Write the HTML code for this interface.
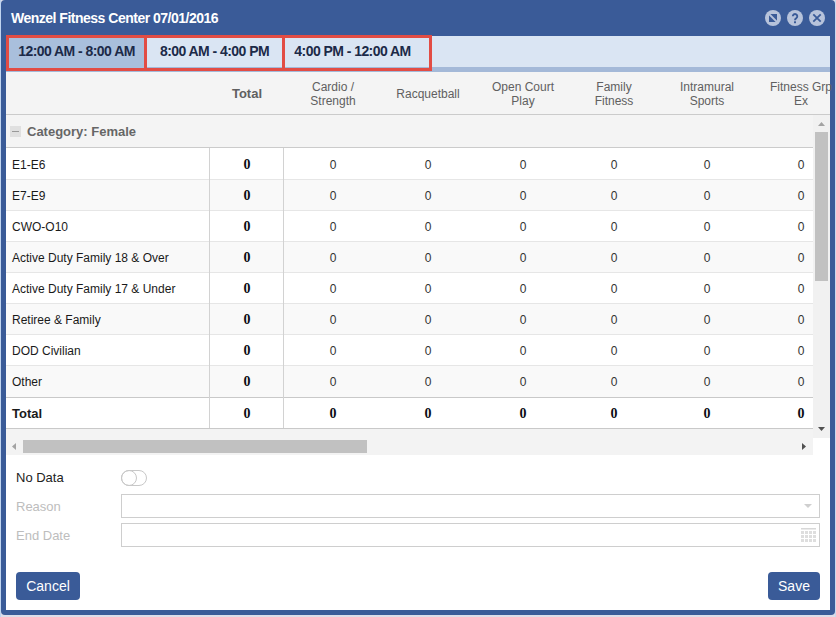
<!DOCTYPE html>
<html><head><meta charset="utf-8">
<style>
*{margin:0;padding:0;box-sizing:border-box}
html,body{width:836px;height:617px;overflow:hidden;background:#dcdde9;font-family:"Liberation Sans",sans-serif}
.a{position:absolute}
#win{position:absolute;left:1px;top:0;width:834px;height:615px;background:#3a5b98;border-radius:4px}
#inner{position:absolute;left:6px;top:36px;width:824px;height:574px;background:#fff}
#title{position:absolute;left:11px;top:10px;color:#fff;font-weight:bold;font-size:14px;line-height:16px;letter-spacing:-0.5px;white-space:nowrap}
.ico{position:absolute;top:10px;width:16px;height:16px}
#tabbar{position:absolute;left:6px;top:36px;width:824px;height:36px;background:#dae5f3;border-bottom:5px solid #a4b9d8}
.tab{position:absolute;top:35px;height:36px;border:3px solid #e24c44;font-size:14px;font-weight:bold;color:#1c2a48;text-align:center;line-height:27px;letter-spacing:-0.55px;white-space:nowrap}
#hdr{position:absolute;left:6px;top:72px;width:824px;height:43px;background:#f4f4f4;border-bottom:1px solid #cbcbcb}
.hc{position:absolute;top:0px;height:43px;display:flex;align-items:center;justify-content:center;text-align:center;font-size:12px;color:#606060;line-height:14px;white-space:nowrap}
#cat{position:absolute;left:6px;top:115px;width:807px;height:33px;background:#f4f4f4;border-bottom:1px solid #cbcbcb}
.rw{position:absolute;left:6px;width:807px}
.alt{background:#f9f9f9}
.hl{position:absolute;left:6px;width:807px;height:1px;background:#e6e6e6}
.dl{position:absolute;left:6px;width:807px;height:1px;background:#c9c9c9}
.lbl{position:absolute;left:12px;font-size:12px;line-height:14px;color:#1a1a1a;white-space:nowrap}
.v{position:absolute;font-size:12px;line-height:14px;color:#333;text-align:center;width:60px}
.b{font-family:"Liberation Serif",serif;font-weight:bold;font-size:14px;color:#0c0c14}
.vl{position:absolute;top:148px;width:1px;height:280px;background:#d2d2d2}
#vs{position:absolute;left:813px;top:115px;width:17px;height:323px;background:#f1f1f1}
#hs{position:absolute;left:6px;top:429px;width:807px;height:26px;background:#f3f3f3}
.lab{position:absolute;left:16px;font-size:13px;line-height:15px;color:#bdbdbd;white-space:nowrap}
.inp{position:absolute;left:121px;width:699px;height:24px;border:1px solid #cecece;background:#fff}
.btn{position:absolute;top:572px;height:28px;background:#3a5b98;border-radius:4px;color:#fff;font-size:14px;text-align:center;line-height:28px}
</style></head><body>
<div class="a" style="left:0;top:0;width:1px;height:617px;background:#c0d4ef"></div><div class="a" style="left:835px;top:0;width:1px;height:617px;background:#c8d9ef"></div><div id="win"></div>
<div id="inner"></div>
<div id="title">Wenzel Fitness Center 07/01/2016</div>

<svg class="ico" style="left:765px" viewBox="0 0 16 16"><circle cx="8" cy="8" r="8" fill="#b7c3db"/><rect x="4" y="4" width="8" height="8" fill="#3a5b98"/><path d="M3.5 3.5L12.5 12.5" stroke="#b7c3db" stroke-width="1.8"/></svg>
<svg class="ico" style="left:787px" viewBox="0 0 16 16"><circle cx="8" cy="8" r="8" fill="#b7c3db"/><path d="M5.8 6.3A2.25 2.25 0 1 1 9.4 8.1Q8 8.9 8 10.2" fill="none" stroke="#3a5b98" stroke-width="1.9"/><rect x="7" y="11.3" width="2" height="1.9" fill="#3a5b98"/></svg>
<svg class="ico" style="left:809px" viewBox="0 0 16 16"><circle cx="8" cy="8" r="8" fill="#b7c3db"/><path d="M4.3 4.3L11.7 11.7M11.7 4.3L4.3 11.7" stroke="#3a5b98" stroke-width="1.8"/></svg>

<div id="tabbar"></div>
<div class="tab" style="left:6px;width:141px;background:#a9bfdc">12:00 AM - 8:00 AM</div>
<div class="tab" style="left:144px;width:141px">8:00 AM - 4:00 PM</div>
<div class="tab" style="left:282px;width:150px;padding-right:9px">4:00 PM - 12:00 AM</div>
<div id="hdr">
 <div class="hc" style="left:211px;width:60px;font-weight:bold;font-size:13px">Total</div>
 <div class="hc" style="left:287px;width:80px">Cardio /<br>Strength</div>
 <div class="hc" style="left:382px;width:80px">Racquetball</div>
 <div class="hc" style="left:477px;width:80px">Open Court<br>Play</div>
 <div class="hc" style="left:568px;width:80px">Family<br>Fitness</div>
 <div class="hc" style="left:661px;width:80px">Intramural<br>Sports</div>
 <div class="hc" style="left:755px;width:80px">Fitness Grp<br>Ex</div>
</div>
<div id="cat"><div class="a" style="left:4px;top:11px;width:11px;height:11px;background:#e0e0e0"></div><div class="a" style="left:6px;top:16px;width:7px;height:1px;background:#999"></div>
<div class="a" style="left:21px;top:9px;line-height:15px;font-size:13px;font-weight:bold;color:#666;white-space:nowrap">Category: Female</div></div>
<div class="rw" style="top:148px;height:31px"></div><div class="lbl" style="top:158px">E1-E6</div><div class="v b" style="left:217px;top:158px">0</div><div class="v" style="left:303px;top:158px">0</div><div class="v" style="left:398px;top:158px">0</div><div class="v" style="left:493px;top:158px">0</div><div class="v" style="left:584px;top:158px">0</div><div class="v" style="left:677px;top:158px">0</div><div class="v" style="left:771px;top:158px">0</div>
<div class="rw alt" style="top:180px;height:30px"></div><div class="lbl" style="top:189px">E7-E9</div><div class="v b" style="left:217px;top:189px">0</div><div class="v" style="left:303px;top:189px">0</div><div class="v" style="left:398px;top:189px">0</div><div class="v" style="left:493px;top:189px">0</div><div class="v" style="left:584px;top:189px">0</div><div class="v" style="left:677px;top:189px">0</div><div class="v" style="left:771px;top:189px">0</div>
<div class="rw" style="top:211px;height:30px"></div><div class="lbl" style="top:220px">CWO-O10</div><div class="v b" style="left:217px;top:220px">0</div><div class="v" style="left:303px;top:220px">0</div><div class="v" style="left:398px;top:220px">0</div><div class="v" style="left:493px;top:220px">0</div><div class="v" style="left:584px;top:220px">0</div><div class="v" style="left:677px;top:220px">0</div><div class="v" style="left:771px;top:220px">0</div>
<div class="rw alt" style="top:242px;height:30px"></div><div class="lbl" style="top:251px">Active Duty Family 18 &amp; Over</div><div class="v b" style="left:217px;top:251px">0</div><div class="v" style="left:303px;top:251px">0</div><div class="v" style="left:398px;top:251px">0</div><div class="v" style="left:493px;top:251px">0</div><div class="v" style="left:584px;top:251px">0</div><div class="v" style="left:677px;top:251px">0</div><div class="v" style="left:771px;top:251px">0</div>
<div class="rw" style="top:273px;height:30px"></div><div class="lbl" style="top:282px">Active Duty Family 17 &amp; Under</div><div class="v b" style="left:217px;top:282px">0</div><div class="v" style="left:303px;top:282px">0</div><div class="v" style="left:398px;top:282px">0</div><div class="v" style="left:493px;top:282px">0</div><div class="v" style="left:584px;top:282px">0</div><div class="v" style="left:677px;top:282px">0</div><div class="v" style="left:771px;top:282px">0</div>
<div class="rw alt" style="top:304px;height:30px"></div><div class="lbl" style="top:313px">Retiree &amp; Family</div><div class="v b" style="left:217px;top:313px">0</div><div class="v" style="left:303px;top:313px">0</div><div class="v" style="left:398px;top:313px">0</div><div class="v" style="left:493px;top:313px">0</div><div class="v" style="left:584px;top:313px">0</div><div class="v" style="left:677px;top:313px">0</div><div class="v" style="left:771px;top:313px">0</div>
<div class="rw" style="top:335px;height:30px"></div><div class="lbl" style="top:344px">DOD Civilian</div><div class="v b" style="left:217px;top:344px">0</div><div class="v" style="left:303px;top:344px">0</div><div class="v" style="left:398px;top:344px">0</div><div class="v" style="left:493px;top:344px">0</div><div class="v" style="left:584px;top:344px">0</div><div class="v" style="left:677px;top:344px">0</div><div class="v" style="left:771px;top:344px">0</div>
<div class="rw alt" style="top:366px;height:31px"></div><div class="lbl" style="top:375px">Other</div><div class="v b" style="left:217px;top:375px">0</div><div class="v" style="left:303px;top:375px">0</div><div class="v" style="left:398px;top:375px">0</div><div class="v" style="left:493px;top:375px">0</div><div class="v" style="left:584px;top:375px">0</div><div class="v" style="left:677px;top:375px">0</div><div class="v" style="left:771px;top:375px">0</div>
<div class="hl" style="top:179px"></div>
<div class="hl" style="top:210px"></div>
<div class="hl" style="top:241px"></div>
<div class="hl" style="top:272px"></div>
<div class="hl" style="top:303px"></div>
<div class="hl" style="top:334px"></div>
<div class="hl" style="top:365px"></div>
<div class="dl" style="top:397px"></div><div class="dl" style="top:428px"></div>
<div class="lbl" style="top:407px;font-weight:bold;font-size:13px">Total</div><div class="v b" style="left:217px;top:407px">0</div><div class="v b" style="left:303px;top:407px">0</div><div class="v b" style="left:398px;top:407px">0</div><div class="v b" style="left:493px;top:407px">0</div><div class="v b" style="left:584px;top:407px">0</div><div class="v b" style="left:677px;top:407px">0</div><div class="v b" style="left:771px;top:407px">0</div>
<div class="vl" style="left:209px"></div>
<div class="vl" style="left:283px"></div>
<div id="vs"><div class="a" style="left:2px;top:17px;width:13px;height:149px;background:#c1c1c1"></div>
<svg class="a" style="left:5px;top:7px" width="7" height="4"><path d="M0 4L3.5 0L7 4z" fill="#a3a3a3"/></svg>
<svg class="a" style="left:5px;top:312px" width="7" height="4"><path d="M0 0L3.5 4L7 0z" fill="#505050"/></svg></div>
<div id="hs"><div class="a" style="left:17px;top:11px;width:344px;height:13px;background:#c1c1c1"></div>
<svg class="a" style="left:6px;top:14px" width="4" height="7"><path d="M4 0L0 3.5L4 7z" fill="#a3a3a3"/></svg>
<svg class="a" style="left:796px;top:14px" width="4" height="7"><path d="M0 0L4 3.5L0 7z" fill="#505050"/></svg></div>
<div class="lab" style="top:470px;color:#222">No Data</div>
<div class="a" style="left:121px;top:470px;width:26px;height:16px;border:1px solid #c8c8c8;border-radius:8px"></div>
<div class="a" style="left:121px;top:470px;width:16px;height:16px;border:1px solid #c8c8c8;border-radius:50%"></div>
<div class="lab" style="top:499px">Reason</div>
<div class="inp" style="top:494px"></div>
<div class="lab" style="top:528px">End Date</div>
<div class="inp" style="top:523px"></div>
<svg class="a" style="left:804px;top:504px" width="8" height="4"><path d="M0 0L8 0L4 4z" fill="#cfcfcf"/></svg>
<svg class="a" style="left:801px;top:528px" width="16" height="15"><rect x="0" y="0" width="15" height="1.5" fill="#d8d8d8"/><rect x="0" y="3" width="3" height="3" fill="#dedede"/><rect x="4" y="3" width="3" height="3" fill="#dedede"/><rect x="8" y="3" width="3" height="3" fill="#dedede"/><rect x="12" y="3" width="3" height="3" fill="#dedede"/><rect x="0" y="7" width="3" height="3" fill="#dedede"/><rect x="4" y="7" width="3" height="3" fill="#dedede"/><rect x="8" y="7" width="3" height="3" fill="#dedede"/><rect x="12" y="7" width="3" height="3" fill="#dedede"/><rect x="0" y="11" width="3" height="3" fill="#dedede"/><rect x="4" y="11" width="3" height="3" fill="#dedede"/><rect x="8" y="11" width="3" height="3" fill="#dedede"/><rect x="12" y="11" width="3" height="3" fill="#dedede"/></svg>
<div class="btn" style="left:16px;width:64px">Cancel</div>
<div class="btn" style="left:768px;width:52px">Save</div>
</body></html>
